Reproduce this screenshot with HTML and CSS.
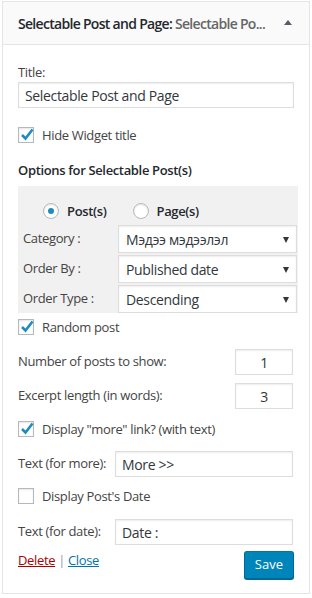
FILE: index.html
```html
<!DOCTYPE html>
<html lang="en">
<head>
    <meta charset="UTF-8">
    <meta name="viewport" content="width=device-width, initial-scale=1.0">
    <title>Selectable Post and Page widget</title>
    <link rel="stylesheet" href="styles.css">
</head>
<body>

    <div class="widget">
        <div class="widget-top">
            <h3 class="widget-title">Selectable Post and Page:<span class="in-title"> Selectable Po...</span></h3>
            <span class="toggle"></span>
        </div>

        <div class="widget-inside">
            <label class="block-label">Title:</label>
            <input class="text-input wide" type="text" value="Selectable Post and Page">

            <div class="check-row first-check">
                <span class="checkbox checked"><svg viewBox="0 0 16 16"><polyline points="3,8 6.5,11.5 13.5,2.5"/></svg></span>
                <span>Hide Widget title</span>
            </div>

            <h4 class="section-title">Options for Selectable Post(s)</h4>

            <div class="options-box">
                <div class="radio-row">
                    <span class="radio on"></span><b>Post(s)</b>
                    <span class="radio"></span><b>Page(s)</b>
                </div>
                <div class="opt-row">
                    <span class="opt-label">Category :</span>
                    <div class="select-wrap"><select><option>Мэдээ мэдээлэл</option></select></div>
                </div>
                <div class="opt-row">
                    <span class="opt-label">Order By :</span>
                    <div class="select-wrap"><select><option>Published date</option></select></div>
                </div>
                <div class="opt-row">
                    <span class="opt-label">Order Type :</span>
                    <div class="select-wrap"><select><option>Descending</option></select></div>
                </div>
            </div>

            <div class="check-row random-check">
                <span class="checkbox checked"><svg viewBox="0 0 16 16"><polyline points="3,8 6.5,11.5 13.5,2.5"/></svg></span>
                <span>Random post</span>
            </div>

            <div class="field-row num-first">
                <span>Number of posts to show:</span>
                <input class="text-input small" type="text" value="1">
            </div>
            <div class="field-row num-second">
                <span>Excerpt length (in words):</span>
                <input class="text-input small" type="text" value="3">
            </div>

            <div class="check-row more-check">
                <span class="checkbox checked"><svg viewBox="0 0 16 16"><polyline points="3,8 6.5,11.5 13.5,2.5"/></svg></span>
                <span>Display "more" link? (with text)</span>
            </div>

            <div class="field-row more-text">
                <span>Text (for more):</span>
                <input class="text-input medium" type="text" value="More >>">
            </div>

            <div class="check-row date-check">
                <span class="checkbox"></span>
                <span>Display Post's Date</span>
            </div>

            <div class="field-row date-text">
                <span>Text (for date):</span>
                <input class="text-input medium" type="text" value="Date :">
            </div>

            <div class="widget-control">
                <div class="links">
                    <a href="#" class="delete">Delete</a> <span class="sep">|</span> <a href="#" class="close">Close</a>
                </div>
                <button class="save-button">Save</button>
            </div>
        </div>
    </div>

</body>
</html>
```

FILE: styles.css
```css
body {
    margin: 0;
    background: #fff;
    font-family: "Open Sans", "Noto Sans", Arial, sans-serif;
    font-size: 13px;
    letter-spacing: -0.35px;
    color: #444;
}
.widget {
    margin: 1px 2px 0;
    border: 1px solid #e5e5e5;
    background: #fff;
}
.widget-top {
    height: 42px;
    background: #fafafa;
    border-bottom: 1px solid #e5e5e5;
    display: flex;
    align-items: center;
    padding: 0 17px 0 15px;
}
.widget-title {
    margin: 0;
    flex: 1;
    font-size: 14px;
    font-weight: 600;
    letter-spacing: -0.7px;
    color: #23282d;
    white-space: nowrap;
    overflow: hidden;
}
.in-title {
    color: #666;
}
.toggle {
    width: 0;
    height: 0;
    border-left: 4px solid transparent;
    border-right: 4px solid transparent;
    border-bottom: 5px solid #555d66;
    margin-top: -2px;
}
.widget-inside {
    padding: 0 15px 14px;
}
.block-label {
    display: block;
    line-height: 18px;
    margin-top: 18px;
}
.text-input {
    display: block;
    box-sizing: border-box;
    height: 26px;
    border: 1px solid #ddd;
    box-shadow: inset 0 1px 2px rgba(0, 0, 0, 0.07);
    font-family: inherit;
    font-size: 14px;
    letter-spacing: -0.35px;
    color: #32373c;
    padding: 0 6px;
    margin: 0;
}
.text-input.wide {
    width: 100%;
    margin-top: 1px;
}
.text-input.small {
    width: 58px;
    text-align: center;
    margin-right: 1px;
}
.text-input.medium {
    width: 178px;
    margin-right: 1px;
}
.check-row {
    display: flex;
    align-items: center;
    height: 16px;
    line-height: 16px;
}
.checkbox {
    box-sizing: border-box;
    width: 16px;
    height: 16px;
    border: 1px solid #b4b9be;
    box-shadow: inset 0 1px 2px rgba(0, 0, 0, 0.1);
    margin-right: 8px;
    position: relative;
    background: #fff;
}
.checkbox svg {
    position: absolute;
    left: 0;
    top: -1px;
    width: 16px;
    height: 16px;
    fill: none;
    stroke: #1e8cbe;
    stroke-width: 2.6;
}
.first-check { margin-top: 19px; }
.random-check { margin-top: 6px; }
.more-check { margin-top: 12px; }
.date-check { margin-top: 11px; }
.section-title {
    margin: 18px 0 0;
    font-size: 13px;
    font-weight: 600;
    line-height: 18px;
    color: #23282d;
}
.options-box {
    margin-top: 7px;
    width: 280px;
    background: #f1f1f1;
    padding: 0 1px 0 5px;
    box-sizing: border-box;
}
.radio-row {
    display: flex;
    align-items: center;
    height: 26px;
    padding-top: 12px;
    margin-bottom: 1px;
    padding-left: 20px;
    color: #23282d;
}
.radio-row b {
    font-weight: 600;
    margin-right: 26px;
}
.radio {
    box-sizing: border-box;
    width: 16px;
    height: 16px;
    border: 1px solid #b4b9be;
    border-radius: 50%;
    background: #fff;
    box-shadow: inset 0 1px 2px rgba(0, 0, 0, 0.1);
    margin-right: 8px;
    position: relative;
}
.radio.on::after {
    content: "";
    position: absolute;
    left: 4px;
    top: 4px;
    width: 6px;
    height: 6px;
    border-radius: 50%;
    background: #1e8cbe;
}
.opt-row {
    display: flex;
    align-items: center;
    height: 28px;
    margin-bottom: 2px;
}
.opt-row:last-child {
    margin-bottom: 0;
}
.opt-label {
    width: 95px;
    margin-top: -3px;
}
.select-wrap {
    flex: 1;
    position: relative;
    height: 28px;
}
.select-wrap select {
    appearance: none;
    -webkit-appearance: none;
    width: 100%;
    height: 28px;
    box-sizing: border-box;
    border: 1px solid #ddd;
    box-shadow: inset 0 1px 2px rgba(0, 0, 0, 0.07);
    background: #fff;
    font-family: inherit;
    font-size: 14px;
    letter-spacing: -0.35px;
    color: #32373c;
    padding: 0 7px;
    border-radius: 0;
    margin: 0;
}
.select-wrap::after {
    content: "";
    position: absolute;
    right: 8px;
    top: 12px;
    border-left: 3.5px solid transparent;
    border-right: 3.5px solid transparent;
    border-top: 6px solid #32373c;
}
.field-row {
    display: flex;
    align-items: center;
    justify-content: space-between;
}
.field-row span {
    margin-top: -2px;
}
.num-first { margin-top: 14px; }
.num-second { margin-top: 8px; }
.more-text { margin-top: 14px; }
.date-text { margin-top: 15px; }
.widget-control {
    display: flex;
    justify-content: space-between;
    align-items: flex-start;
    margin-top: 6px;
}
.links {
    line-height: 18px;
}
.links a {
    text-decoration: underline;
}
.delete {
    color: #a00;
}
.close {
    color: #0073aa;
}
.sep {
    color: #999;
}
.save-button {
    height: 28px;
    padding: 0 10px 2px;
    background: #0085ba;
    border: 1px solid #0073aa;
    border-color: #0073aa #006799 #006799;
    border-radius: 3px;
    box-shadow: 0 1px 0 #006799;
    color: #fff;
    font-family: inherit;
    font-size: 13px;
    cursor: pointer;
}
```
